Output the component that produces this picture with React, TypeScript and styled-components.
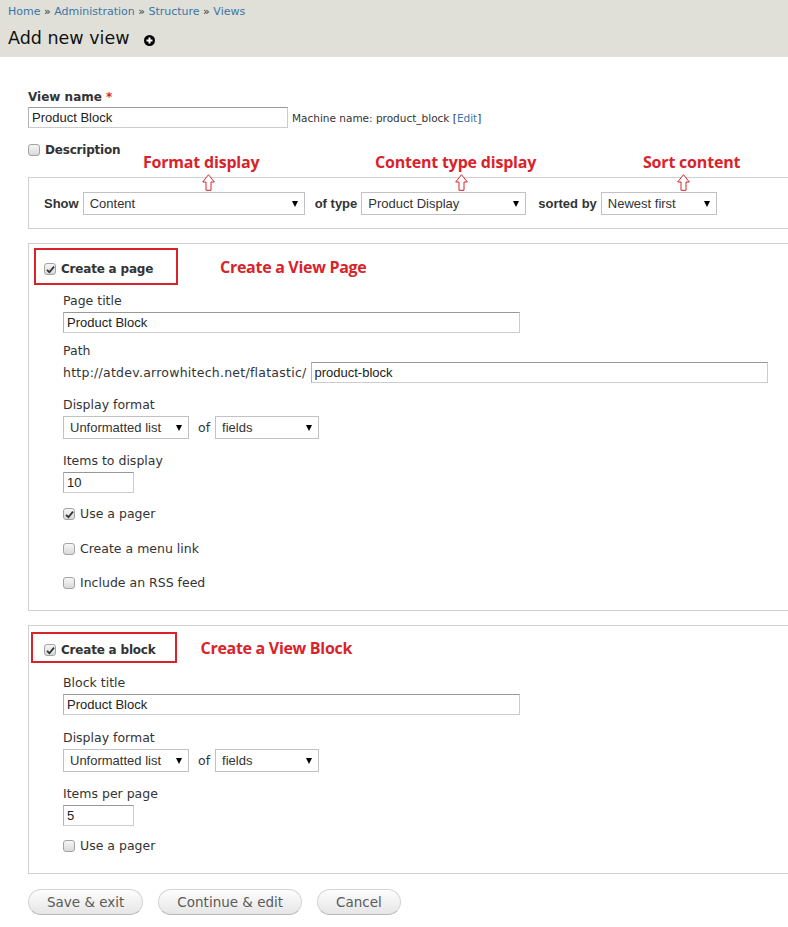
import React from 'react';
import styled, { createGlobalStyle } from 'styled-components';

const GlobalStyle = createGlobalStyle`
  html, body { margin: 0; padding: 0; background: #fff; }
  body {
    font-family: "DejaVu Sans", Verdana, sans-serif;
    color: #333;
    overflow-x: hidden;
  }
  * { box-sizing: border-box; }
`;

const RED = '#d9232a';

const Page = styled.div`
  width: 788px;
  min-height: 927px;
  overflow: hidden;
  background: #fff;
`;

const Header = styled.header`
  background: #e0e0d8;
  height: 57px;
  padding: 5px 8px 0;
`;

const Breadcrumb = styled.nav`
  font-size: 11px;
  line-height: 14px;
  color: #333;
`;

const Crumb = styled.a`
  color: #3b75a8;
  text-decoration: none;
`;

const TitleRow = styled.div`
  display: flex;
  align-items: center;
  margin-top: 7px;
`;

const Title = styled.h1`
  margin: 0;
  font-size: 17.5px;
  font-weight: normal;
  line-height: 24px;
  color: #111;
`;

const AddIcon = styled.svg`
  margin: 4px 0 0 15px;
  width: 11px;
  height: 11px;
`;

const Main = styled.main`
  padding: 32px 0 20px 28px;
`;

const BoldLabel = styled.label`
  display: block;
  font-size: 12px;
  font-weight: bold;
  line-height: 16px;
  color: #333;
`;

const Required = styled.span`
  color: ${RED};
`;

const InlineRow = styled.div`
  display: flex;
  align-items: center;
  margin-top: 2px;
`;

const TextInput = styled.input<{ $w: number }>`
  width: ${p => p.$w}px;
  height: 21px;
  border: 1px solid #ccc;
  border-top-color: #999;
  border-left-color: #b4b4b4;
  padding: 0 3px;
  font: 13px "Liberation Sans", Arial, sans-serif;
  color: #222;
  background: #fff;
  outline: none;
`;

const Hint = styled.span`
  margin-left: 4px;
  font-size: 10.5px;
  color: #333;
`;

const EditLink = styled.a`
  color: #3b75a8;
  text-decoration: none;
`;

const CheckRow = styled.label<{ $mt?: number; $bold?: boolean }>`
  display: flex;
  align-items: center;
  height: 16px;
  margin-top: ${p => p.$mt ?? 0}px;
  font-size: ${p => (p.$bold ? '12px' : '12.5px')};
  font-weight: ${p => (p.$bold ? 'bold' : 'normal')};
  letter-spacing: ${p => (p.$bold ? '-0.2px' : '0')};
  color: #333;
  line-height: 16px;
`;

const Box = styled.span`
  display: inline-flex;
  align-items: center;
  justify-content: center;
  width: 12px;
  height: 12px;
  margin-right: 5px;
  border: 1px solid #a3a3a3;
  border-radius: 3px;
  background: linear-gradient(#f6f6f6, #d9d9d9);
  flex: none;
`;

const Checkbox = ({ checked }: { checked?: boolean }) => (
  <Box>
    {checked && (
      <svg width="9" height="9" viewBox="0 0 9 9">
        <path d="M1 4.8 L3.4 7.2 L8 1.6" fill="none" stroke="#333" strokeWidth="1.8" />
      </svg>
    )}
  </Box>
);

const FilterArea = styled.div`
  position: relative;
  margin-top: 19px;
`;

const Fieldset = styled.fieldset<{ $mt: number; $pb?: number }>`
  margin: ${p => p.$mt}px -30px 0 0;
  padding: 0 0 ${p => p.$pb ?? 0}px;
  border: 1px solid #d0d0d0;
  min-width: 0;
`;

const FilterRow = styled.div`
  display: flex;
  align-items: center;
  padding: 14px 15px 13px;
`;

const InlineLabel = styled.span<{ $ml?: number }>`
  font: bold 13px "Liberation Sans", Arial, sans-serif;
  color: #333;
  margin: 0 4px 0 ${p => p.$ml ?? 0}px;
`;

const OfText = styled.span`
  font-size: 12.5px;
  color: #333;
  margin: 0 5px 0 9px;
`;

const SelectWrap = styled.span<{ $w: number }>`
  position: relative;
  display: inline-block;
  width: ${p => p.$w}px;
  height: 23px;
  flex: none;
`;

const NativeSelect = styled.select`
  appearance: none;
  -webkit-appearance: none;
  width: 100%;
  height: 100%;
  border: 1px solid #c2c2c2;
  border-radius: 0;
  background: #fff;
  padding: 0 0 0 6px;
  font: 13px "Liberation Sans", Arial, sans-serif;
  color: #333;
  outline: none;
`;

const Caret = styled.span`
  position: absolute;
  right: 7px;
  top: 9px;
  border-left: 3.5px solid transparent;
  border-right: 3.5px solid transparent;
  border-top: 6px solid #000;
  pointer-events: none;
`;

const Select = ({ w, value }: { w: number; value: string }) => (
  <SelectWrap $w={w}>
    <NativeSelect defaultValue={value}>
      <option>{value}</option>
    </NativeSelect>
    <Caret />
  </SelectWrap>
);

const AnnotationText = styled.span<{ $x: number; $y: number }>`
  position: absolute;
  left: ${p => p.$x}px;
  top: ${p => p.$y}px;
  font: bold 16px "Open Sans", "DejaVu Sans", sans-serif;
  line-height: 20px;
  color: ${RED};
  white-space: nowrap;
  letter-spacing: -0.2px;
`;

const ArrowSvg = styled.svg<{ $x: number; $y: number }>`
  position: absolute;
  left: ${p => p.$x}px;
  top: ${p => p.$y}px;
  width: 13px;
  height: 17px;
`;

const UpArrow = ({ x, y }: { x: number; y: number }) => (
  <ArrowSvg $x={x} $y={y} viewBox="0 0 13 17">
    <polygon
      points="6.5,0.7 12.3,8 9,8 9,16.3 4,16.3 4,8 0.7,8"
      fill="#fff"
      stroke={RED}
      strokeWidth="1"
    />
  </ArrowSvg>
);

const SectionHead = styled.div<{ $ml: number; $mt: number; $gap: number }>`
  display: flex;
  align-items: center;
  gap: ${p => p.$gap}px;
  margin: ${p => p.$mt}px 0 0 ${p => p.$ml}px;
`;

const Highlight = styled.div<{ $pl: number; $pr: number; $pt: number; $pb: number }>`
  display: inline-flex;
  border: 2px solid ${RED};
  padding: ${p => p.$pt}px ${p => p.$pr}px ${p => p.$pb}px ${p => p.$pl}px;
`;

const SideNote = styled.span`
  font: bold 16px "Open Sans", "DejaVu Sans", sans-serif;
  color: ${RED};
  letter-spacing: -0.3px;
  line-height: 20px;
`;

const Body = styled.div`
  padding-left: 34px;
`;

const FormItem = styled.div<{ $mt: number }>`
  margin-top: ${p => p.$mt}px;
`;

const Label = styled.label`
  display: block;
  font-size: 12.5px;
  line-height: 16px;
  color: #333;
  margin-bottom: 3px;
`;

const ControlRow = styled.div`
  display: flex;
  align-items: center;
`;

const PathPrefix = styled.span`
  font-size: 12.5px;
  color: #333;
  margin-right: 4px;
  letter-spacing: 0.25px;
`;

const Buttons = styled.div`
  display: flex;
  gap: 15px;
  margin-top: 15px;
`;

const Button = styled.button`
  height: 26px;
  padding: 0 18px;
  border: 1px solid #d4d4d4;
  border-bottom-color: #b8b8b8;
  border-radius: 13px;
  background: linear-gradient(#fdfdfd, #e6e6e6);
  color: #5a5a5a;
  font: 13.5px "DejaVu Sans", Verdana, sans-serif;
  cursor: pointer;
`;

export default function App() {
  return (
    <Page>
      <GlobalStyle />
      <Header>
        <Breadcrumb>
          <Crumb href="#">Home</Crumb> » <Crumb href="#">Administration</Crumb> »{' '}
          <Crumb href="#">Structure</Crumb> » <Crumb href="#">Views</Crumb>
        </Breadcrumb>
        <TitleRow>
          <Title>Add new view</Title>
          <AddIcon viewBox="0 0 11 11">
            <circle cx="5.5" cy="5.5" r="5.5" fill="#000" />
            <path d="M5.5 2.5 V8.5 M2.5 5.5 H8.5" stroke="#fff" strokeWidth="2" />
          </AddIcon>
        </TitleRow>
      </Header>

      <Main>
        <BoldLabel>
          View name <Required>*</Required>
        </BoldLabel>
        <InlineRow>
          <TextInput $w={260} defaultValue="Product Block" />
          <Hint>
            Machine name: product_block [<EditLink href="#">Edit</EditLink>]
          </Hint>
        </InlineRow>

        <CheckRow $mt={14} $bold>
          <Checkbox /> Description
        </CheckRow>

        <FilterArea>
          <AnnotationText $x={115} $y={-25}>Format display</AnnotationText>
          <AnnotationText $x={347} $y={-25}>Content type display</AnnotationText>
          <AnnotationText $x={615} $y={-25}>Sort content</AnnotationText>
          <Fieldset $mt={0}>
            <FilterRow>
              <InlineLabel>Show</InlineLabel>
              <Select w={222} value="Content" />
              <InlineLabel $ml={10}>of type</InlineLabel>
              <Select w={165} value="Product Display" />
              <InlineLabel $ml={12}>sorted by</InlineLabel>
              <Select w={116} value="Newest first" />
            </FilterRow>
          </Fieldset>
          <UpArrow x={174} y={-3} />
          <UpArrow x={427} y={-3} />
          <UpArrow x={649} y={-3} />
        </FilterArea>

        <Fieldset $mt={14} $pb={19}>
          <SectionHead $ml={5} $mt={4} $gap={42}>
            <Highlight $pl={8} $pr={23} $pt={11} $pb={6}>
              <CheckRow $bold>
                <Checkbox checked /> Create a page
              </CheckRow>
            </Highlight>
            <SideNote>Create a View Page</SideNote>
          </SectionHead>
          <Body>
            <FormItem $mt={8}>
              <Label>Page title</Label>
              <TextInput $w={457} defaultValue="Product Block" />
            </FormItem>
            <FormItem $mt={10}>
              <Label>Path</Label>
              <ControlRow>
                <PathPrefix>http://atdev.arrowhitech.net/flatastic/</PathPrefix>
                <TextInput $w={457} defaultValue="product-block" />
              </ControlRow>
            </FormItem>
            <FormItem $mt={14}>
              <Label>Display format</Label>
              <ControlRow>
                <Select w={126} value="Unformatted list" />
                <OfText>of</OfText>
                <Select w={104} value="fields" />
              </ControlRow>
            </FormItem>
            <FormItem $mt={14}>
              <Label>Items to display</Label>
              <TextInput $w={71} defaultValue="10" />
            </FormItem>
            <CheckRow $mt={13}>
              <Checkbox checked /> Use a pager
            </CheckRow>
            <CheckRow $mt={19}>
              <Checkbox /> Create a menu link
            </CheckRow>
            <CheckRow $mt={18}>
              <Checkbox /> Include an RSS feed
            </CheckRow>
          </Body>
        </Fieldset>

        <Fieldset $mt={14} $pb={19}>
          <SectionHead $ml={2} $mt={6} $gap={24}>
            <Highlight $pl={11} $pr={19} $pt={8} $pb={3}>
              <CheckRow $bold>
                <Checkbox checked /> Create a block
              </CheckRow>
            </Highlight>
            <SideNote>Create a View Block</SideNote>
          </SectionHead>
          <Body>
            <FormItem $mt={12}>
              <Label>Block title</Label>
              <TextInput $w={457} defaultValue="Product Block" />
            </FormItem>
            <FormItem $mt={15}>
              <Label>Display format</Label>
              <ControlRow>
                <Select w={126} value="Unformatted list" />
                <OfText>of</OfText>
                <Select w={104} value="fields" />
              </ControlRow>
            </FormItem>
            <FormItem $mt={14}>
              <Label>Items per page</Label>
              <TextInput $w={71} defaultValue="5" />
            </FormItem>
            <CheckRow $mt={12}>
              <Checkbox /> Use a pager
            </CheckRow>
          </Body>
        </Fieldset>

        <Buttons>
          <Button>Save &amp; exit</Button>
          <Button>Continue &amp; edit</Button>
          <Button>Cancel</Button>
        </Buttons>
      </Main>
    </Page>
  );
}
